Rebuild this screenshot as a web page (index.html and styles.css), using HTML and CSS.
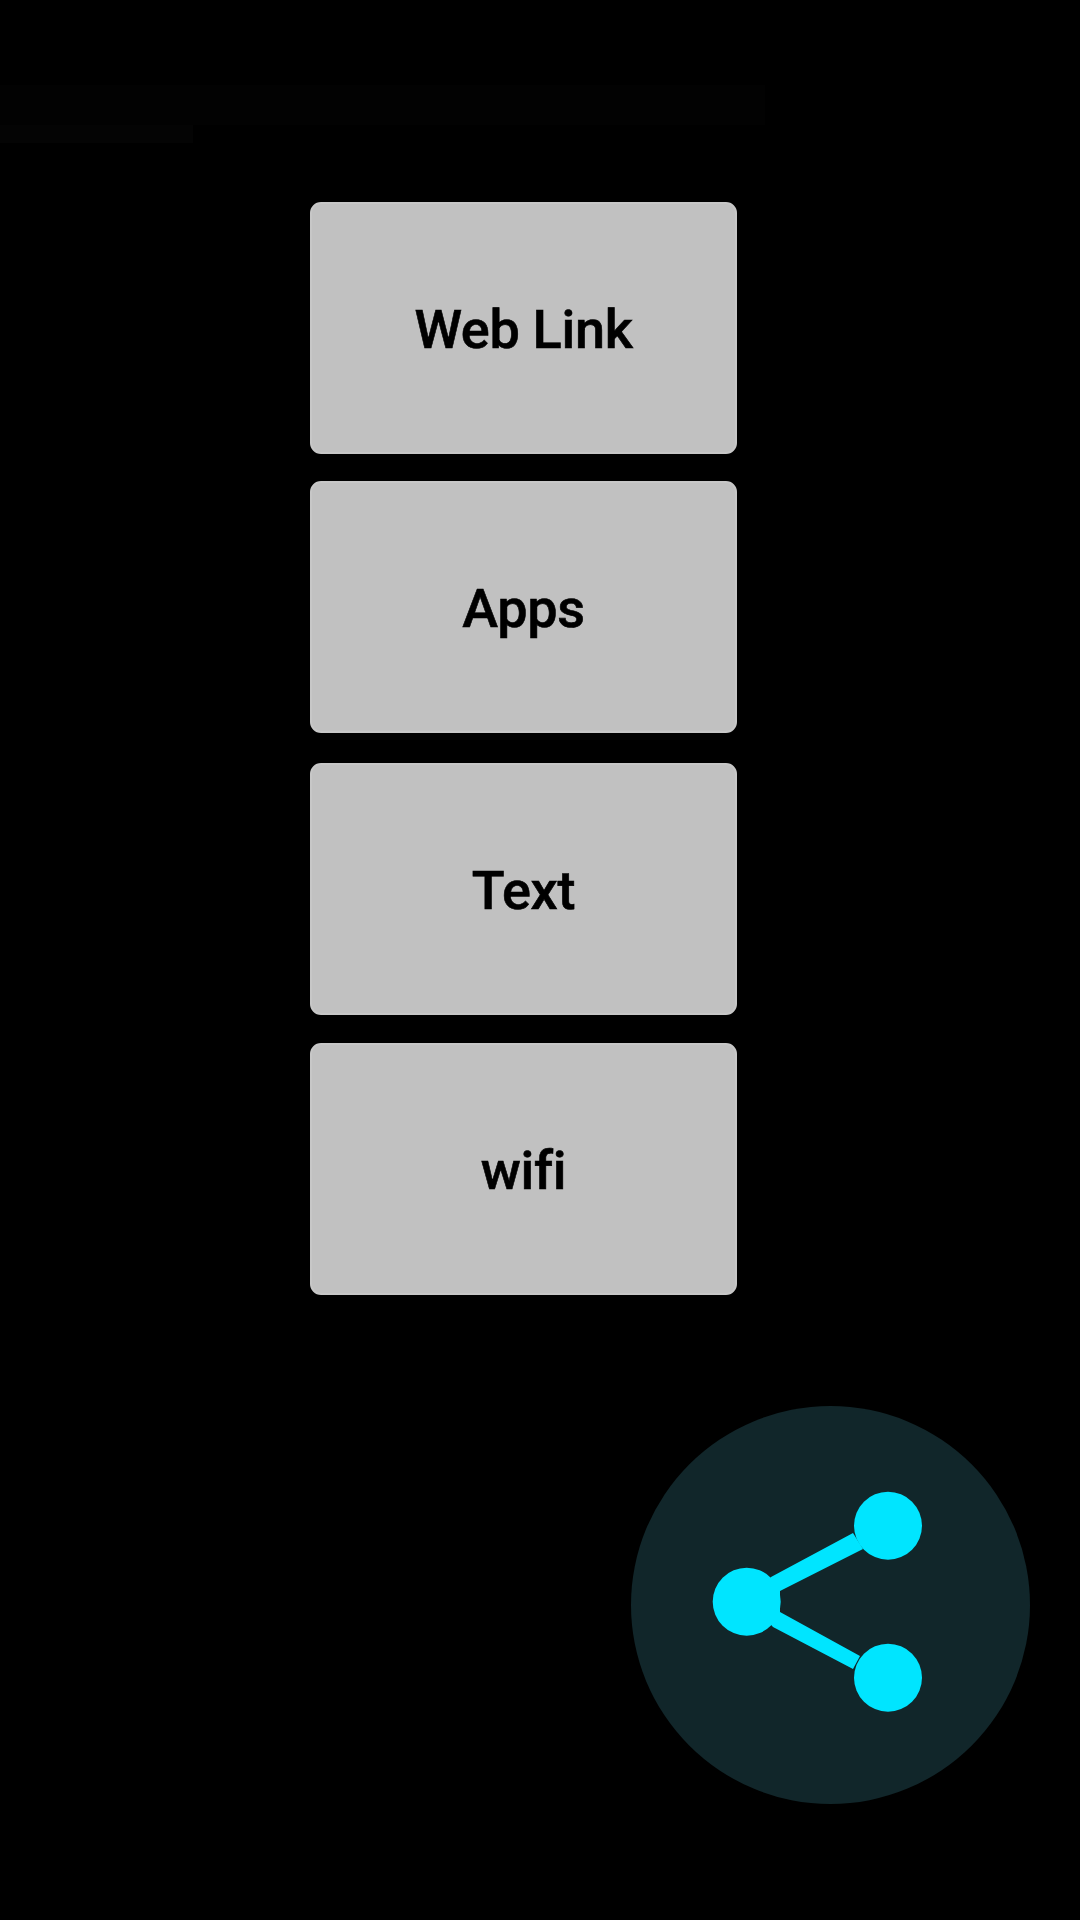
FILE: index.html
```html
<!DOCTYPE html>
<html lang="en">
<head>
<meta charset="utf-8">
<title>Share</title>
<link rel="stylesheet" href="styles.css">
</head>
<body>
<div class="screen">
  <header class="top">
    <div class="band-wide"></div>
    <div class="band-short"></div>
  </header>
  <main class="menu">
    <button class="item" type="button">Web Link</button>
    <button class="item item-apps" type="button">Apps</button>
    <button class="item item-text" type="button">Text</button>
    <button class="item item-wifi" type="button">wifi</button>
  </main>
  <button class="fab" type="button" aria-label="Share">
    <svg class="fab-icon" viewBox="0 0 398 398" aria-hidden="true">
      <g transform="translate(-631 -1406)">
        <circle cx="888" cy="1525.7" r="34"/>
        <circle cx="746.7" cy="1601.7" r="34"/>
        <circle cx="888" cy="1677.7" r="34"/>
        <polygon points="853,1533 863,1549 780,1591 780,1612 860,1656 853,1669 773,1627 750,1602 771,1577"/>
      </g>
    </svg>
  </button>
</div>
</body>
</html>
```

FILE: styles.css
```css
* { box-sizing: border-box; }
html, body { margin: 0; padding: 0; background: #000; }
.screen {
  position: relative;
  width: 1080px;
  height: 1920px;
  overflow: hidden;
  background: #000;
  font-family: Roboto, "Liberation Sans", sans-serif;
}
.top { height: 202px; padding-top: 85px; }
.band-wide { width: 765px; height: 40px; background: #020202; }
.band-short { width: 193px; height: 18px; background: #040404; }
.menu {
  display: flex;
  flex-direction: column;
  align-items: flex-start;
  padding-left: 310px;
}
.item {
  width: 427px;
  height: 252px;
  padding: 3px 0 0;
  border: 2px solid #c7c7c7;
  border-radius: 11px;
  background: #c1c1c1;
  color: #000;
  font-family: inherit;
  font-size: 54px;
  font-weight: 500;
  letter-spacing: -0.3px;
  -webkit-text-stroke: 0.6px #000;
  text-align: center;
}
.item-apps { margin-top: 27px; }
.item-text { margin-top: 30px; }
.item-wifi { margin-top: 28px; }
.fab {
  position: absolute;
  left: 631px;
  top: 1406px;
  width: 399px;
  height: 398px;
  padding: 0;
  border: 0;
  border-radius: 50%;
  background: #11262a;
}
.fab-icon { display: block; width: 398px; height: 398px; fill: #00e5ff; }
```
